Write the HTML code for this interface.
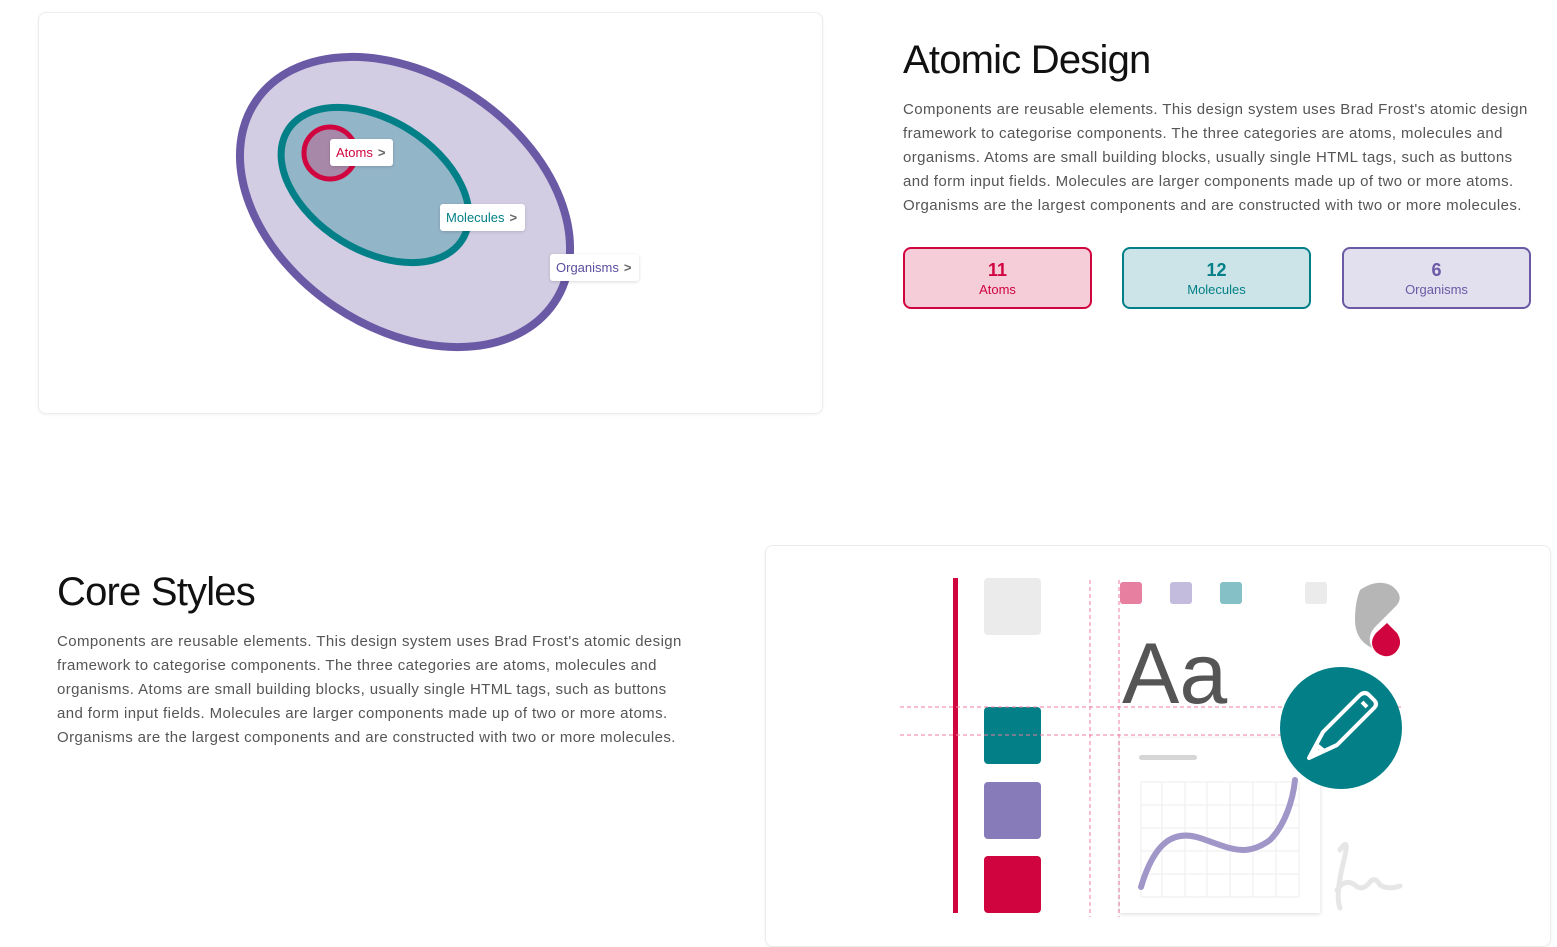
<!DOCTYPE html>
<html><head><style>
body{margin:0;background:#fff;font-family:"Liberation Sans",sans-serif;width:1557px;height:917px;overflow:hidden;position:relative}
.card{position:absolute;border:1px solid #ececec;border-radius:8px;box-shadow:0 1px 3px rgba(0,0,0,.05);background:#fff}
h2{position:absolute;margin:0;font-weight:400;font-size:40px;color:#111;letter-spacing:-0.8px}
p{position:absolute;margin:0;font-size:15px;letter-spacing:0.4px;line-height:24px;color:#555;white-space:nowrap}
.stat{position:absolute;top:247px;width:185px;height:58px;border:2px solid;border-radius:8px;text-align:center}
.stat b{display:block;font-size:18px;margin-top:11px;font-weight:700}
.stat span{display:block;font-size:13px;margin-top:1px}
.lab{position:absolute;background:#fff;border-radius:3px;font-size:13px;padding:6px 8px 6px 6px;box-shadow:0 1px 3px rgba(0,0,0,.15)}
.lab i{font-style:normal;color:#666;margin-left:5px;font-weight:700}
</style></head><body>
<div class="card" style="left:38px;top:12px;width:783px;height:400px"></div>
<svg style="position:absolute;left:0;top:0" width="900" height="420">
<ellipse cx="405" cy="202" rx="180" ry="126" transform="rotate(34 405 202)" fill="#d3cde3" stroke="#6a5aa5" stroke-width="8"/>
<ellipse cx="375" cy="185" rx="103" ry="65" transform="rotate(32 375 185)" fill="#93b5c8" stroke="#037f87" stroke-width="7"/>
<circle cx="330" cy="153" r="26" fill="#a888a8" stroke="#d0053f" stroke-width="5"/>
</svg>
<div class="lab" style="left:330px;top:139px;color:#d0053f">Atoms<i>&gt;</i></div>
<div class="lab" style="left:440px;top:204px;color:#037f87">Molecules<i>&gt;</i></div>
<div class="lab" style="left:550px;top:254px;color:#5b4ea0">Organisms<i>&gt;</i></div>

<h2 style="left:903px;top:38px">Atomic Design</h2>
<p style="left:903px;top:98px">Components are reusable elements. This design system uses Brad Frost's atomic design<br>framework to categorise components. The three categories are atoms, molecules and<br>organisms. Atoms are small building blocks, usually single HTML tags, such as buttons<br>and form input fields. Molecules are larger components made up of two or more atoms.<br>Organisms are the largest components and are constructed with two or more molecules.</p>
<div class="stat" style="left:903px;background:#f5cdd9;border-color:#d0053f;color:#d0053f"><b>11</b><span>Atoms</span></div>
<div class="stat" style="left:1122px;background:#cce4e7;border-color:#037f87;color:#037f87"><b>12</b><span>Molecules</span></div>
<div class="stat" style="left:1342px;background:#e2dfee;border-color:#6a5aa5;color:#6a5aa5"><b>6</b><span>Organisms</span></div>

<h2 style="left:57px;top:570px">Core Styles</h2>
<p style="left:57px;top:630px">Components are reusable elements. This design system uses Brad Frost's atomic design<br>framework to categorise components. The three categories are atoms, molecules and<br>organisms. Atoms are small building blocks, usually single HTML tags, such as buttons<br>and form input fields. Molecules are larger components made up of two or more atoms.<br>Organisms are the largest components and are constructed with two or more molecules.</p>

<div class="card" style="left:765px;top:545px;width:784px;height:400px"></div>
<svg style="position:absolute;left:900px;top:560px" width="520" height="357">
<rect x="53" y="18" width="5" height="335" fill="#d0053f"/>
<rect x="84" y="18" width="57" height="57" rx="4" fill="#ebebeb"/>
<rect x="84" y="147" width="57" height="57" rx="4" fill="#037f87"/>
<rect x="84" y="222" width="57" height="57" rx="4" fill="#877bba"/>
<rect x="84" y="296" width="57" height="57" rx="4" fill="#d0053f"/>
<g stroke="#ee7e9e" stroke-width="1" stroke-dasharray="4 3" fill="none">
<line x1="190" y1="20" x2="190" y2="357"/><line x1="219" y1="20" x2="219" y2="357"/>
<line x1="0" y1="147" x2="503" y2="147"/><line x1="0" y1="175" x2="503" y2="175"/>
</g>
<rect x="220" y="22" width="22" height="22" rx="3" fill="#e77fa0"/>
<rect x="270" y="22" width="22" height="22" rx="3" fill="#c3bcdc"/>
<rect x="320" y="22" width="22" height="22" rx="3" fill="#84c0c6"/>
<rect x="405" y="22" width="22" height="22" rx="3" fill="#ebebeb"/>
<path d="M460 30 Q478 18 492 26 Q505 36 496 46 L476 66 Q466 76 472 88 Q455 80 455 60 Q455 42 460 30Z" fill="#b6b6b6"/>
<path d="M487 63 L497 73 Q504 84 495 93 Q486 100 476 92 Q468 83 476 73Z" fill="#d0053f"/>
<text x="222" y="143" font-family="Liberation Sans,sans-serif" font-size="86" fill="#555">Aa</text>
<rect x="220" y="178" width="200" height="175" fill="#fff" style="filter:drop-shadow(0 1px 2px rgba(0,0,0,.15))"/>
<rect x="239" y="195" width="58" height="5" rx="2.5" fill="#d6d6d6"/>
<g stroke="#eee" stroke-width="1"><path d="M241 222V337M262 222V337M285 222V337M307 222V337M330 222V337M353 222V337M376 222V337M399 222V337M241 222H399M241 245H399M241 268H399M241 291H399M241 314H399M241 337H399"/></g>
<path d="M241 327 C255 280 275 270 300 278 C330 288 345 298 370 280 C385 265 393 240 395 220" stroke="#a096c8" stroke-width="6" fill="none" stroke-linecap="round"/>
<circle cx="441" cy="168" r="61" fill="#037f87"/>
<path d="M423 172 L460 135 Q465 131 469 135 L474 140 Q478 144 474 148 L437 185 L409 198 Z M418 186 L414 194 L423 190 Z M462 142 L467 147" stroke="#fff" stroke-width="4" fill="none" stroke-linejoin="round"/>
<path d="M440 290 Q450 275 444 300 Q435 335 440 348 M437 330 Q445 318 455 325 Q462 332 470 322 Q475 316 480 325 Q488 330 500 326" stroke="#e6e6e6" stroke-width="5" fill="none" stroke-linecap="round"/>
</svg>
</body></html>
